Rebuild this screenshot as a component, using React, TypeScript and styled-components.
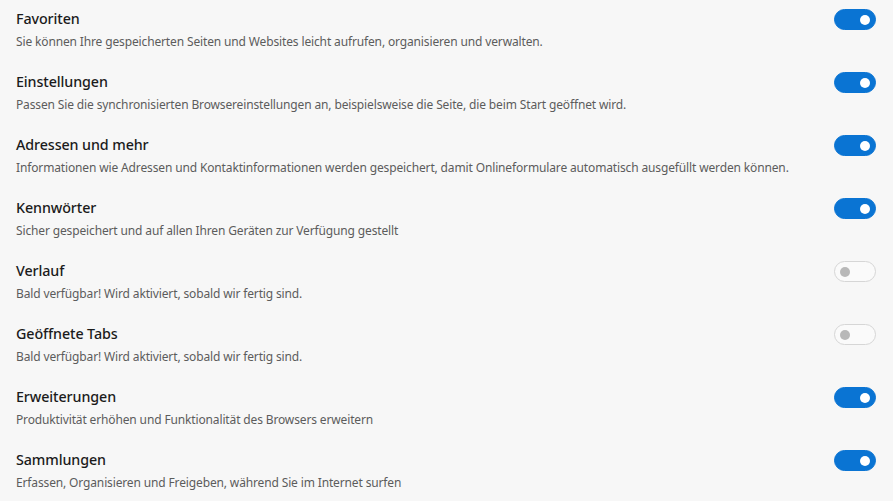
import React from "react";
import styled, { createGlobalStyle } from "styled-components";

const Global = createGlobalStyle`
  html, body { margin: 0; padding: 0; background: #f7f7f7; }
  body { font-family: "Noto Sans", "Open Sans", sans-serif; }
`;

const Page = styled.div`
  width: 893px;
  height: 501px;
  box-sizing: border-box;
  padding: 8px 17px 0 16px;
  display: flex;
  flex-direction: column;
  background: #f7f7f7;
  overflow: hidden;
`;

const Row = styled.div`
  display: flex;
  align-items: flex-start;
  justify-content: space-between;
  height: 63px;
  flex-shrink: 0;
`;

const Texts = styled.div`
  display: flex;
  flex-direction: column;
  gap: 3px;
`;

const Title = styled.div`
  font-size: 14.3px;
  line-height: 21px;
  color: #1b1b1b;
  font-weight: 500;
  letter-spacing: -0.1px;
`;

const Desc = styled.div`
  font-size: 12px;
  line-height: 20px;
  color: #5c5c5c;
  letter-spacing: -0.14px;
`;

const Toggle = styled.div<{ $on: boolean }>`
  margin-top: 1px;
  width: 42px;
  height: 21px;
  box-sizing: border-box;
  border-radius: 11px;
  display: flex;
  align-items: center;
  justify-content: ${(p) => (p.$on ? "flex-end" : "flex-start")};
  padding: 0 5px;
  background: ${(p) => (p.$on ? "#0a74d3" : "#fafafa")};
  border: 1px solid ${(p) => (p.$on ? "#0a74d3" : "#d6d6d6")};
`;

const Knob = styled.div<{ $on: boolean }>`
  width: 10px;
  height: 10px;
  border-radius: 50%;
  background: ${(p) => (p.$on ? "#ffffff" : "#b8b8b8")};
`;

const items = [
  { t: "Favoriten", d: "Sie können Ihre gespeicherten Seiten und Websites leicht aufrufen, organisieren und verwalten.", on: true },
  { t: "Einstellungen", d: "Passen Sie die synchronisierten Browsereinstellungen an, beispielsweise die Seite, die beim Start geöffnet wird.", on: true },
  { t: "Adressen und mehr", d: "Informationen wie Adressen und Kontaktinformationen werden gespeichert, damit Onlineformulare automatisch ausgefüllt werden können.", on: true },
  { t: "Kennwörter", d: "Sicher gespeichert und auf allen Ihren Geräten zur Verfügung gestellt", on: true },
  { t: "Verlauf", d: "Bald verfügbar! Wird aktiviert, sobald wir fertig sind.", on: false },
  { t: "Geöffnete Tabs", d: "Bald verfügbar! Wird aktiviert, sobald wir fertig sind.", on: false },
  { t: "Erweiterungen", d: "Produktivität erhöhen und Funktionalität des Browsers erweitern", on: true },
  { t: "Sammlungen", d: "Erfassen, Organisieren und Freigeben, während Sie im Internet surfen", on: true },
];

export default function App() {
  return (
    <>
      <Global />
      <Page>
        {items.map((it) => (
          <Row key={it.t}>
            <Texts>
              <Title>{it.t}</Title>
              <Desc>{it.d}</Desc>
            </Texts>
            <Toggle $on={it.on}>
              <Knob $on={it.on} />
            </Toggle>
          </Row>
        ))}
      </Page>
    </>
  );
}
